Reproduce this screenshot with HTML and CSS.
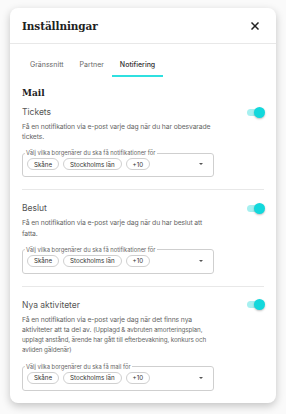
FILE: index.html
```html
<!DOCTYPE html>
<html lang="sv">
<head>
<meta charset="utf-8">
<link rel="stylesheet" href="styles.css">
</head>
<body>
<div class="card">
  <div class="header">
    <h1 class="title">Inställningar</h1>
    <svg class="close" width="8" height="8" viewBox="0 0 8 8"><path d="M1 1L7 7M7 1L1 7" stroke="#222" stroke-width="1.5" stroke-linecap="square"/></svg>
  </div>
  <div class="tabs">
    <div class="tab">Gränssnitt</div>
    <div class="tab">Partner</div>
    <div class="tab active">Notifiering</div>
  </div>
  <div class="content">
    <h2 class="heading">Mail</h2>

    <div class="section">
      <div class="row">
        <div class="name">Tickets</div>
        <div class="toggle"><span class="knob"></span></div>
      </div>
      <p class="desc">Få en notifikation via e-post varje dag när du har obesvarade tickets.</p>
      <fieldset class="select">
        <legend>Välj vilka borgenärer du ska få notifikationer för</legend>
        <div class="chips">
          <span class="chip">Skåne</span>
          <span class="chip">Stockholms län</span>
          <span class="chip">+10</span>
          <span class="arrow"></span>
        </div>
      </fieldset>
    </div>

    <div class="section">
      <div class="row">
        <div class="name">Beslut</div>
        <div class="toggle"><span class="knob"></span></div>
      </div>
      <p class="desc">Få en notifikation via e-post varje dag när du har beslut att fatta.</p>
      <fieldset class="select">
        <legend>Välj vilka borgenärer du ska få notifikationer för</legend>
        <div class="chips">
          <span class="chip">Skåne</span>
          <span class="chip">Stockholms län</span>
          <span class="chip">+10</span>
          <span class="arrow"></span>
        </div>
      </fieldset>
    </div>

    <div class="section last">
      <div class="row">
        <div class="name">Nya aktiviteter</div>
        <div class="toggle"><span class="knob"></span></div>
      </div>
      <p class="desc">Få en notifikation via e-post varje dag när det finns nya aktiviteter att ta del av. <span class="small">(Upplagd &amp; avbruten amorteringsplan, upplagt anstånd, ärende har gått till efterbevakning, konkurs och avliden gäldenär)</span></p>
      <fieldset class="select">
        <legend>Välj vilka borgenärer du ska få mail för</legend>
        <div class="chips">
          <span class="chip">Skåne</span>
          <span class="chip">Stockholms län</span>
          <span class="chip">+10</span>
          <span class="arrow"></span>
        </div>
      </fieldset>
    </div>
  </div>
</div>
</body>
</html>
```
FILE: styles.css
```css
* { box-sizing: border-box; }
html, body { margin: 0; padding: 0; }
body {
  background: #fafafa;
  font-family: "Inter", "DejaVu Sans", sans-serif;
  color: #555;
  width: 286px;
  height: 414px;
  overflow: hidden;
}
.card {
  margin: 8px 10px 0 10px;
  width: 266px;
  height: 395px;
  background: #fff;
  border-radius: 8px;
  box-shadow: 0 3px 8px rgba(0,0,0,0.22);
  overflow: hidden;
}
.header {
  height: 36px;
  padding: 0 17px 0 12px;
  display: flex;
  align-items: center;
  justify-content: space-between;
  border-bottom: 1px solid #e8e8e8;
}
.title {
  margin: 0;
  font-family: "DejaVu Serif", serif;
  font-weight: bold;
  font-size: 10.5px;
  color: #222;
  letter-spacing: -0.1px;
}
.close { display: block; }
.tabs {
  display: flex;
  padding: 9px 12px 0 12px;
  height: 33px;
}
.tab {
  padding: 0 8px;
  height: 24px;
  display: flex;
  align-items: center;
  font-size: 7px;
  color: #666;
  border-bottom: 2px solid transparent;
}
.tab.active {
  color: #333;
  font-weight: 500;
  border-bottom-color: #2fe0e0;
}
.content {
  padding: 0 12px;
}
.heading {
  margin: 10px 0 0 0;
  font-family: "DejaVu Serif", serif;
  font-weight: bold;
  font-size: 9px;
  color: #222;
  line-height: 12px;
}
.section {
  border-bottom: 1px solid #e8e8e8;
  padding: 7px 0 12px 0;
}
.section + .section { padding-top: 12px; }
.section.last { border-bottom: none; }
.row {
  display: flex;
  align-items: center;
  justify-content: space-between;
  height: 12px;
}
.name {
  font-size: 8.5px;
  color: #555;
}
.toggle {
  position: relative;
  width: 15px;
  height: 7px;
  border-radius: 4px;
  background: #a6f0f0;
  margin-right: 2px;
}
.knob {
  position: absolute;
  right: -3px;
  top: -2px;
  width: 11px;
  height: 11px;
  border-radius: 50%;
  background: #12d8dc;
  box-shadow: 0 1px 2px rgba(0,0,0,0.25);
}
.desc {
  margin: 4px 0 0 0;
  width: 196px;
  font-size: 6.8px;
  line-height: 10.2px;
  letter-spacing: -0.12px;
  color: #666;
}
.small { font-size: 6.3px; line-height: 7px; }
.select {
  margin: 8px 0 0 0;
  width: 192px;
  height: 27px;
  padding: 0 4px;
  border: 1px solid #cfcfcf;
  border-radius: 3px;
}
.select legend {
  font-size: 5.8px;
  color: #666;
  padding: 0 1px;
  margin-left: -2px;
  line-height: 6px;
}
.chips {
  display: flex;
  align-items: center;
  gap: 4px;
  height: 18px;
  margin-top: -1px;
}
.chip {
  height: 12px;
  padding: 0 6px;
  border: 1px solid #d0d0d0;
  border-radius: 6px;
  font-size: 6.2px;
  color: #333;
  display: flex;
  align-items: center;
}
.arrow {
  margin-left: auto;
  margin-right: 6px;
  width: 0;
  height: 0;
  border-left: 2.5px solid transparent;
  border-right: 2.5px solid transparent;
  border-top: 2.5px solid #555;
}
```
